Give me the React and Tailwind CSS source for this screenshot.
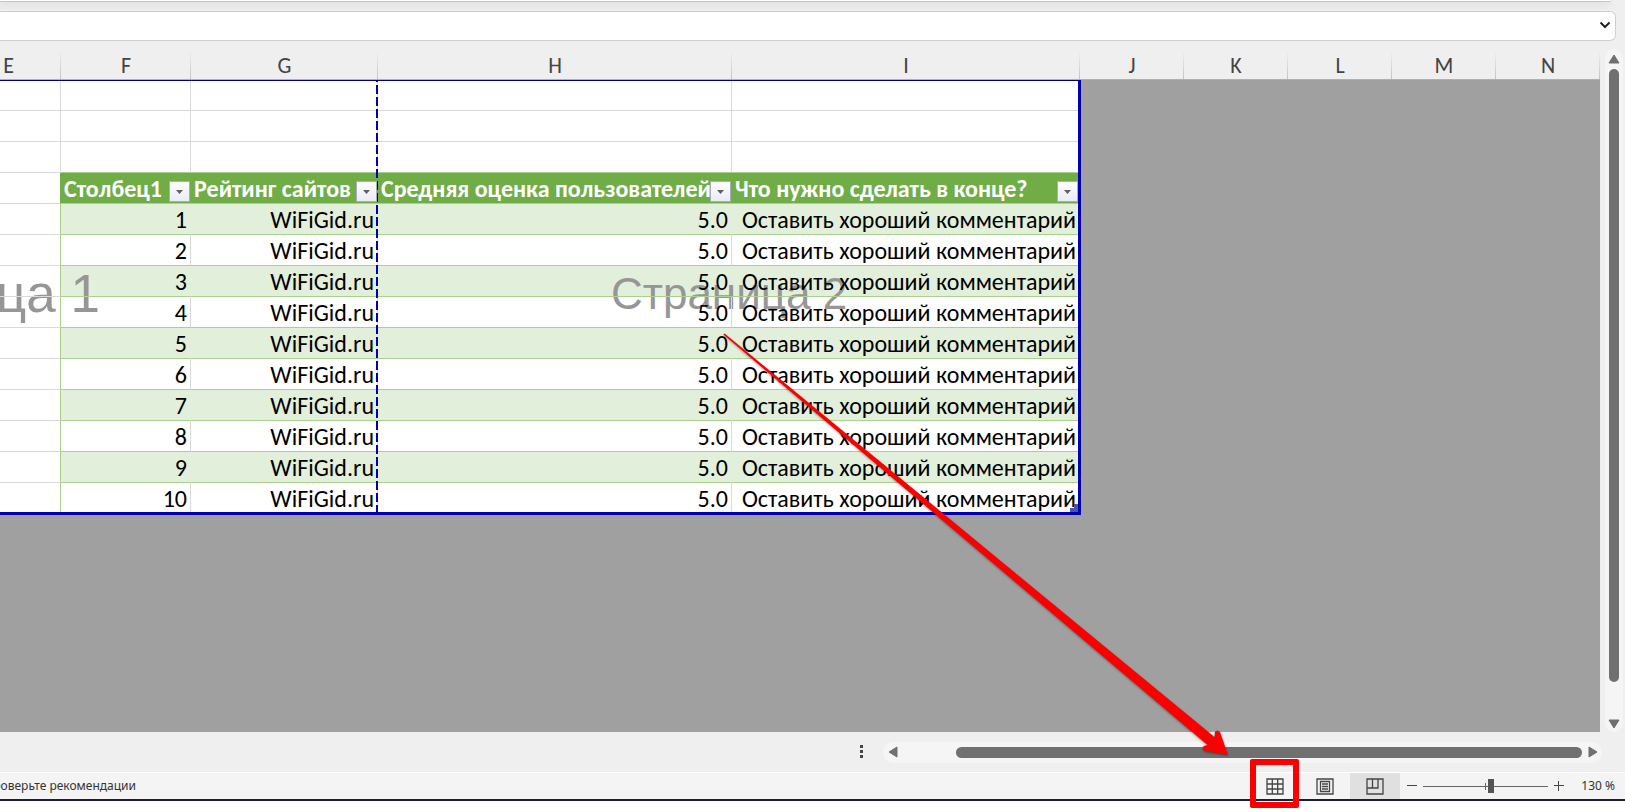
import React, { useState } from 'react';

const columns = [
  { name: 'F', width: 'w-[130px]' },
  { name: 'G', width: 'w-[187px]' },
  { name: 'H', width: 'w-[354px]' },
  { name: 'I', width: 'w-[348px]' },
  { name: 'J', width: 'w-[104px]' },
  { name: 'K', width: 'w-[104px]' },
  { name: 'L', width: 'w-[104px]' },
  { name: 'M', width: 'w-[104px]' },
  { name: 'N', width: 'w-[104px]' },
];

const tableHeads = ['Столбец1', 'Рейтинг сайтов', 'Средняя оценка пользователей', 'Что нужно сделать в конце?'];

const rows = Array.from({ length: 10 }, (_, i) => [
  i + 1,
  'WiFiGid.ru',
  '5.0',
  'Оставить хороший комментарий',
]);

function ColumnHeaders() {
  return (
    <div className="flex h-[39px] overflow-hidden border-b border-[#b0b0b0] text-[22px] leading-[50px] text-[#444]">
      <div className="relative flex w-[61px] shrink-0 justify-end overflow-hidden">
        <span className="w-[105px] shrink-0 text-center">E</span>
        <HeadLine />
      </div>
      {columns.map(col => (
        <div key={col.name} className={`relative h-[38px] shrink-0 text-center ${col.width}`}>
          {col.name}
          <HeadLine />
        </div>
      ))}
    </div>
  );
}

function HeadLine() {
  return <i className="absolute right-0 bottom-0 h-7 w-px bg-linear-to-b from-transparent to-[#c4c4c4]" />;
}

function FilterButton({ label, last }) {
  return (
    <button
      aria-label={label}
      className={`absolute bottom-px z-30 flex h-[21px] w-[21px] items-center justify-center border border-[#a9abb5] bg-linear-to-b from-white to-[#e9ebf8] ${
        last ? 'right-0' : 'right-px'
      }`}
    >
      <svg width="7" height="4" viewBox="0 0 7 4">
        <path d="M0 0h7L3.500 4z" fill="#5f5f5f" />
      </svg>
    </button>
  );
}

function Sheet() {
  return (
    <div className="relative w-[1081px] overflow-hidden border-t border-r-3 border-b-3 border-[#0000b0] border-t-[#00007a] bg-white">
      <table className="w-full table-fixed border-separate border-spacing-0 text-[24px] text-black">
        <colgroup>
          <col className="w-[61px]" />
          <col className="w-[130px]" />
          <col className="w-[187px]" />
          <col className="w-[354px]" />
          <col />
        </colgroup>
        <thead>
          {[0, 1, 2].map(r => (
            <tr key={r}>
              {[0, 1, 2, 3, 4].map(c => (
                <td key={c} className="p-0">
                  <div
                    className={`border-[#d9d9d9] ${c < 4 ? 'border-r' : ''} ${r === 0 ? 'h-[30px]' : 'h-[31px]'} ${
                      r === 2 && c > 0 ? 'border-b border-b-[#a9d08e]' : 'border-b'
                    }`}
                  />
                </td>
              ))}
            </tr>
          ))}
          <tr>
            <td className="p-0">
              <div className="h-[31px] border-r border-b border-[#d9d9d9] border-r-[#70ad47]" />
            </td>
            {tableHeads.map((text, i) => (
              <th key={text} scope="col" className="bg-[#70ad47] p-0 text-left font-bold text-white">
                <div className="relative h-[31px] border-b border-[#a9d08e] pl-[3px] leading-[31px] whitespace-nowrap">
                  {text}
                  <FilterButton label={text} last={i === 3} />
                </div>
              </th>
            ))}
          </tr>
        </thead>
        <tbody>
          {rows.map((row, r) => {
            const height = r === 9 ? 'h-[29px]' : 'h-[31px] border-b';
            return (
              <tr key={r}>
                <td className="p-0">
                  <div className={`relative z-10 border-r border-[#d9d9d9] border-r-[#a9d08e] ${height}`} />
                </td>
                {row.map((value, c) => (
                  <td key={c} className={`p-0 text-right ${r % 2 === 0 ? 'bg-[#e2efda]' : ''}`}>
                    <div
                      className={`relative z-10 border-b-[#a9d08e] leading-[31px] whitespace-nowrap ${height} ${
                        c === 3 ? 'pr-[2px]' : 'border-r pr-[3px]'
                      } ${r % 2 ? 'border-r-[#d9d9d9]' : 'border-r-transparent'}`}
                    >
                      {value}
                    </div>
                  </td>
                ))}
              </tr>
            );
          })}
        </tbody>
      </table>

      {/* page watermarks sit between the cell fill and the cell text */}
      <span className="absolute top-[181px] right-[978px] text-[53px] leading-[64px] whitespace-nowrap text-[#969696]" style={{ fontFamily: "'Liberation Sans', sans-serif" }}>
        Страница 1
      </span>
      <span className="absolute top-[181px] left-[611px] text-[44px] leading-[64px] whitespace-nowrap text-[#969696]" style={{ fontFamily: "'Liberation Sans', sans-serif" }}>
        Страница 2
      </span>

      {/* page break */}
      <div className="absolute inset-y-0 left-[376px] z-20 w-[2px] bg-[repeating-linear-gradient(to_bottom,#0000b0_0_1px,transparent_1px_4px,#0000b0_4px_12px)]" />
      <svg className="absolute right-0 bottom-0 z-20" width="8" height="8" viewBox="0 0 8 8">
        <path d="M4 0h4v8H0V4h4z" fill="#4355b8" />
      </svg>
    </div>
  );
}

function VerticalScroll() {
  return (
    <div className="mt-2 mr-[2px] ml-auto flex w-[18px] flex-col items-center rounded-full bg-[#f5f5f5] pt-[5px] pb-[3px]">
      <button aria-label="Вверх">
        <svg className="block" width="12" height="10" viewBox="0 0 12 10">
          <path d="M6 1l5 8H1z" fill="#707070" stroke="#707070" strokeLinejoin="round" />
        </svg>
      </button>
      <div className="mt-[5px] mb-[37px] w-[10px] flex-1 rounded-full bg-[#707070]" />
      <button aria-label="Вниз">
        <svg className="block" width="12" height="10" viewBox="0 0 12 10">
          <path d="M6 9l5-8H1z" fill="#707070" stroke="#707070" strokeLinejoin="round" />
        </svg>
      </button>
    </div>
  );
}

function HorizontalScroll() {
  return (
    <div className="flex h-10 items-center bg-[#efefef] pr-[23px] pl-[860px]">
      <svg width="4" height="14" viewBox="0 0 4 14" fill="#444">
        <path d="M0 0h3v3H0zM0 5h3v3H0zM0 10h3v3H0z" />
      </svg>
      <div className="ml-[19px] flex h-[21px] flex-1 items-center rounded-full bg-[#f5f5f5] pr-1 pl-[5px]">
        <button aria-label="Влево">
          <svg className="block" width="10" height="12" viewBox="0 0 10 12">
            <path d="M1 6l8-5v10z" fill="#707070" stroke="#707070" strokeLinejoin="round" />
          </svg>
        </button>
        <div className="mr-[6px] ml-[58px] h-[11px] flex-1 rounded-full bg-[#707070]" />
        <button aria-label="Вправо">
          <svg className="block" width="10" height="12" viewBox="0 0 10 12">
            <path d="M9 6L1 1v10z" fill="#707070" stroke="#707070" strokeLinejoin="round" />
          </svg>
        </button>
      </div>
    </div>
  );
}

function Callout() {
  return (
    <>
      <span className="pointer-events-none absolute top-[-14px] left-0 z-40 h-[49px] w-[49px] rounded-xs border-6 border-[#fa0000]" />
      <svg className="pointer-events-none absolute right-[70px] bottom-[41px] z-40 drop-shadow-[0_1px_1px_rgba(0,0,0,0.4)]" width="508" height="426" viewBox="722 332 508 426">
        <path
          d="M724.600 333.400L1214.500 737L1215 732Q1217 729 1220 732L1228 755L1205 751Q1201 748 1204 746L1207.500 745L723.400 334.600Z"
          fill="#fa0000"
        />
      </svg>
    </>
  );
}

function StatusBar() {
  const [zoom, setZoom] = useState(55);

  return (
    <footer
      className="flex h-[27px] items-center border-t border-white bg-[#f4f4f4] text-[12px] text-[#333]"
      style={{ fontFamily: "'Noto Sans', sans-serif" }}
    >
      <div className="flex w-[136px] justify-end overflow-hidden">
        <span className="shrink-0 whitespace-nowrap">Специальные возможности: проверьте рекомендации</span>
      </div>
      <div className="ml-auto flex h-full items-center">
        <div className="relative h-full">
          <button aria-label="Обычный" className="flex h-full w-[50px] items-center justify-center">
            <svg width="18" height="17" viewBox="0 0 18 17" fill="none" stroke="#444" strokeWidth="1.300">
              <path d="M1 1h16v15H1zM1 6h16M1 11h16M6.300 1v15M11.700 1v15" />
            </svg>
          </button>
          <Callout />
        </div>
        <button aria-label="Разметка страницы" className="flex h-full w-[50px] items-center justify-center">
          <svg width="18" height="17" viewBox="0 0 18 17" fill="none" stroke="#444" strokeWidth="1.300">
            <path d="M1 1h16v15H1zM4.500 3.500h9v10h-9zM6 6h6M6 8.500h6M6 11h6" />
          </svg>
        </button>
        <button aria-label="Страничный" className="flex h-full w-[50px] items-center justify-center bg-[#e0e0e0]">
          <svg width="18" height="17" viewBox="0 0 18 17" fill="none" stroke="#444" strokeWidth="1.300">
            <path d="M1 1h16v15H1zM1 10h11V1M6.500 1v9" />
          </svg>
        </button>
        <button aria-label="Уменьшить" className="ml-[7px]">
          <svg className="block" width="10" height="10" viewBox="0 0 10 10" stroke="#444">
            <path d="M0 4.500h10" />
          </svg>
        </button>
        <div className="relative mx-[6px] flex h-4 w-[125px] items-center">
          <i className="absolute top-[8px] h-px w-full bg-[#666]" />
          <i className="absolute top-[5px] left-[62px] h-[7px] w-px bg-[#666]" />
          <input
            type="range"
            aria-label="Масштаб"
            value={zoom}
            onChange={e => setZoom(Number(e.target.value))}
            className="relative h-4 w-full appearance-none bg-transparent [&::-webkit-slider-thumb]:h-[14px] [&::-webkit-slider-thumb]:w-[6px] [&::-webkit-slider-thumb]:appearance-none [&::-webkit-slider-thumb]:bg-[#555]"
          />
        </div>
        <button aria-label="Увеличить">
          <svg className="block" width="10" height="10" viewBox="0 0 10 10" stroke="#444">
            <path d="M0 4.500h10M4.500 0v10" />
          </svg>
        </button>
        <span className="w-[61px] pr-[10px] text-right">130 %</span>
      </div>
    </footer>
  );
}

export default function App() {
  return (
    <div className="flex min-h-screen flex-col overflow-hidden bg-[#efefef]" style={{ fontFamily: "Carlito, Lato, sans-serif" }}>
      <div className="mr-[14px] h-[2px] rounded-br-sm border-b border-[#c4c4c4] bg-white shadow-[0_2px_8px_rgba(0,0,0,0.22)]" />

      <div className="relative mt-[9px] mr-[9px] h-[30px]">
        <input
          aria-label="Строка формул"
          className="block h-full w-full rounded-r-md border border-l-0 border-[#cfcfcf] bg-white px-2 outline-none"
        />
        <button aria-label="Развернуть" className="absolute top-[9px] right-[5px]">
          <svg className="block" width="12" height="10" viewBox="0 0 12 10" fill="none" stroke="#222" strokeWidth="2">
            <path d="M1.500 2.500L6 7l4.500-4.500" />
          </svg>
        </button>
      </div>

      <main className="flex flex-1">
        <div className="flex w-[calc(100%-25px)] flex-col">
          <ColumnHeaders />
          <div className="flex-1 bg-[#a0a0a0]">
            <Sheet />
          </div>
        </div>
        <VerticalScroll />
      </main>

      <HorizontalScroll />
      <StatusBar />
      <div className="h-[13px] border-t-2 border-[#1b1d3a] bg-white" />
    </div>
  );
}
